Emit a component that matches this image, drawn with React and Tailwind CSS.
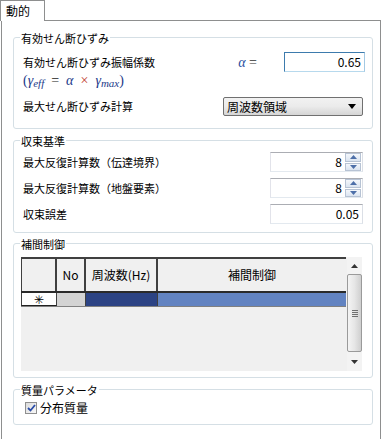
const GroupBox = ({ title, height, className = '', children }) => (
  <div className={`border border-[#d5dfe5] rounded-[3px] ${className}`} style={{ height }}>
    <div className="-mt-[8px] ml-[6px] w-fit bg-white px-[1px] leading-[16px]">{title}</div>
    {children}
  </div>
);

const SpinBox = ({ value }) => (
  <div className="flex h-[20px] w-[93px] items-center border border-[#abadb3] border-l-[#e2e3ea] border-r-[#dbdfe6] border-b-[#e3e9ef] bg-white">
    <span className="flex-1 pr-[3px] text-right text-[12px] leading-none">{value}</span>
    <div className="flex h-[18px] w-[16px] flex-col gap-[1px] mr-[1px]">
      <div className="flex h-[8.5px] items-center justify-center border border-[#b7c3d4] bg-gradient-to-b from-[#f4f7fb] to-[#dbe4f0]">
        <svg width="7" height="4" viewBox="0 0 7 4"><path d="M0 4 L3.5 0 L7 4 Z" fill="#4d6fa8" /></svg>
      </div>
      <div className="flex h-[8.5px] items-center justify-center border border-[#b7c3d4] bg-gradient-to-b from-[#f4f7fb] to-[#dbe4f0]">
        <svg width="7" height="4" viewBox="0 0 7 4"><path d="M0 0 L3.5 4 L7 0 Z" fill="#4d6fa8" /></svg>
      </div>
    </div>
  </div>
);

const TextBox = ({ value, focused }) => (
  <div
    className={`flex h-[20px] items-center justify-end border bg-white pr-[3px] text-[12px] ${
      focused
        ? 'w-[81px] border-[#3d7bad] border-r-[#a4c9e3] border-b-[#b7d9ed]'
        : 'w-[93px] border-[#abadb3] border-l-[#e2e3ea] border-r-[#dbdfe6] border-b-[#e3e9ef]'
    }`}
  >
    {value}
  </div>
);

const App = () => {
  return (
    <div className="h-[439px] w-[384px] overflow-hidden bg-white text-[11px] text-black font-['Noto_Sans_CJK_JP','Liberation_Sans',sans-serif]">
      {/* Tab header */}
      <div className="relative z-10 -mb-[1px] h-[21px] w-[45px] border-x border-t border-[#8e8f8f] bg-white pl-[5px] pt-[2px] text-[12px] leading-[16px]">
        動的
      </div>

      {/* Tab page */}
      <div className="ml-[1px] h-[419px] w-[380px] border-x border-t border-[#8e8f8f] pl-[11px] pr-[7px] pt-[16px]">
        {/* 有効せん断ひずみ */}
        <GroupBox title="有効せん断ひずみ" height={92}>
          <div className="mt-[6px] flex h-[20px] items-center pl-[9px] pr-[7px]">
            <span className="flex-1">有効せん断ひずみ振幅係数</span>
            <span className="mr-[27px] font-['Liberation_Serif',serif] text-[14px]">
              <i className="text-[#1f4fa0]">α</i> <span className="text-[#333]">=</span>
            </span>
            <TextBox value="0.65" focused />
          </div>
          <div className="flex h-[17px] items-center pl-[9px] font-['Liberation_Serif',serif] text-[14px] text-[#1c3a8a]">
            <span>(</span>
            <i>γ</i>
            <i className="mt-[5px] text-[11px]">eff</i>
            <span className="mx-[7px] text-[#222]">=</span>
            <i>α</i>
            <span className="mx-[7px] text-[#c0392b]">×</span>
            <i>γ</i>
            <i className="mt-[5px] text-[11px]">max</i>
            <span>)</span>
          </div>
          <div className="mt-[8px] flex h-[19px] items-center pl-[9px] pr-[9px]">
            <span className="flex-1">最大せん断ひずみ計算</span>
            <div className="flex h-[19px] w-[140px] items-center justify-between rounded-[2px] border border-[#707070] bg-gradient-to-b from-[#f2f2f2] via-[#ebebeb] to-[#d5d5d5] pl-[3px] pr-[6px] text-[12px]">
              <span>周波数領域</span>
              <svg width="8" height="5" viewBox="0 0 8 5"><path d="M0 0 L8 0 L4 5 Z" fill="#000" /></svg>
            </div>
          </div>
        </GroupBox>

        {/* 収束基準 */}
        <GroupBox title="収束基準" height={93} className="mt-[11px]">
          <div className="mt-[3px] flex flex-col gap-[6px] pl-[9px] pr-[9px]">
            <div className="flex items-center">
              <span className="flex-1">最大反復計算数（伝達境界）</span>
              <SpinBox value="8" />
            </div>
            <div className="flex items-center">
              <span className="flex-1">最大反復計算数（地盤要素）</span>
              <SpinBox value="8" />
            </div>
            <div className="flex items-center">
              <span className="flex-1">収束誤差</span>
              <TextBox value="0.05" />
            </div>
          </div>
        </GroupBox>

        {/* 補間制御 */}
        <GroupBox title="補間制御" height={135} className="mt-[10px]">
          <div className="ml-[7px] mt-[5px] flex h-[114px] w-[341px] bg-[#f0f0f0]">
            <div className="w-[325px]">
              <div className="flex h-[36px] border-y-2 border-t-[#404040] border-b-[#2a2a2a] text-[12px]">
                <div className="w-[36px] border-l border-r-2 border-[#404040] bg-[#f0f0f0]" />
                <div className="flex w-[29px] items-center justify-center border-r-2 border-[#404040]">No</div>
                <div className="flex w-[72px] items-center justify-center border-r-2 border-[#404040]">周波数(Hz)</div>
                <div className="flex flex-1 items-center justify-center">補間制御</div>
              </div>
              <div className="flex h-[14px] border-b border-[#808080]">
                <div className="flex w-[36px] items-center justify-center border-x border-b border-x-[#404040] border-b-[#202020] bg-white text-[12px] leading-none">
                  ✳
                </div>
                <div className="w-[29px] border-r border-[#404040] bg-[#d3d3d3]" />
                <div className="w-[72px] border-r border-[#404040] bg-[#2c4384]" />
                <div className="flex-1 bg-[#6283c1]" />
              </div>
            </div>
            {/* Scrollbar */}
            <div className="ml-[1px] flex w-[15px] flex-col bg-[#f3f3f3]">
              <div className="flex h-[17px] items-center justify-center">
                <svg width="7" height="4" viewBox="0 0 7 4"><path d="M0 4 L3.5 0 L7 4 Z" fill="#333" /></svg>
              </div>
              <div className="flex h-[78px] items-center justify-center rounded-[2px] border border-[#9a9a9a] bg-gradient-to-r from-[#f4f4f4] via-[#e6e6e6] to-[#cfcfcf]">
                <div className="flex flex-col gap-[1px]">
                  <div className="h-[1px] w-[6px] bg-[#707070]" />
                  <div className="h-[1px] w-[6px] bg-[#707070]" />
                  <div className="h-[1px] w-[6px] bg-[#707070]" />
                  <div className="h-[1px] w-[6px] bg-[#707070]" />
                </div>
              </div>
              <div className="flex flex-1 items-center justify-center">
                <svg width="7" height="4" viewBox="0 0 7 4"><path d="M0 0 L3.5 4 L7 0 Z" fill="#333" /></svg>
              </div>
            </div>
          </div>
        </GroupBox>

        {/* 質量パラメータ */}
        <GroupBox title="質量パラメータ" height={36} className="mt-[11px]">
          <div className="mt-[1px] flex items-center gap-[3px] pl-[11px]">
            <div className="flex h-[12px] w-[12px] items-center justify-center border border-[#8f8f8f] bg-gradient-to-br from-[#dcdcdc] to-[#f8f8f8]">
              <svg width="9" height="8" viewBox="0 0 9 8">
                <path d="M1 4 L3.5 6.5 L8 1" fill="none" stroke="#2a4ca8" strokeWidth="1.8" />
              </svg>
            </div>
            <span className="text-[12px]">分布質量</span>
          </div>
        </GroupBox>
      </div>
    </div>
  );
};

export default App;
